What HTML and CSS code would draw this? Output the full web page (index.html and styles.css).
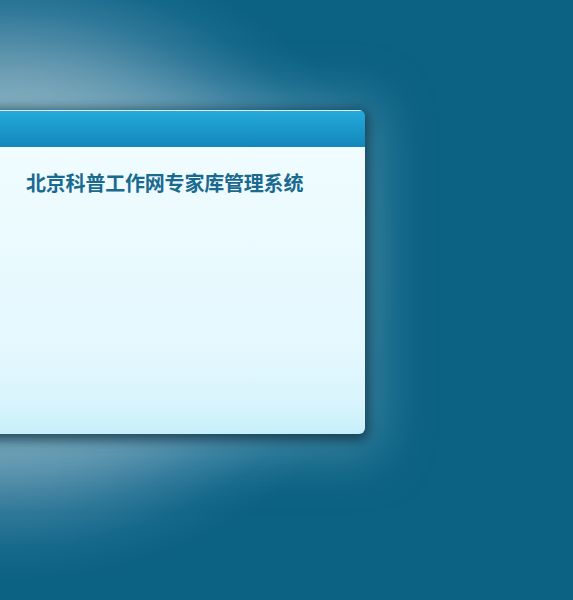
FILE: index.html
```html
<!DOCTYPE html>
<html lang="zh">
<head>
<meta charset="utf-8">
<link rel="stylesheet" href="styles.css">
</head>
<body>
<div class="stage">
  <div class="card">
    <div class="card-head"></div>
    <div class="card-body">
      <h1 class="title">北京科普工作网专家库管理系统</h1>
    </div>
  </div>
</div>
</body>
</html>
```
FILE: styles.css
```css
html, body {
  margin: 0;
  padding: 0;
  height: 100%;
}
body {
  background:
    radial-gradient(ellipse 400px 320px at 0px 262px,
      rgba(145, 180, 195, 1) 0%,
      rgba(138, 176, 191, 1) 50%,
      rgba(100, 152, 176, 0.95) 64%,
      rgba(55, 125, 158, 0.8) 79%,
      rgba(30, 111, 145, 0.5) 90%,
      rgba(12, 98, 131, 0) 100%),
    #0c6283;
  overflow: hidden;
  font-family: "Noto Sans CJK SC", "Liberation Sans", sans-serif;
}
.stage {
  padding-top: 110px;
}
.card {
  width: 580px;
  height: 324px;
  margin-left: -215px;
  border-radius: 6px;
  display: flex;
  flex-direction: column;
  overflow: hidden;
  box-shadow:
    0 3px 12px 3px rgba(15, 45, 60, 0.75),
    0 5px 50px 16px rgba(100, 160, 185, 0.55);
}
.card-head {
  height: 37px;
  flex: none;
  background: linear-gradient(#24aadb, #1386ba);
  border-top: 1px solid #d8eef6;
  box-sizing: border-box;
}
.card-body {
  flex: 1;
  background: linear-gradient(#f0fcff 0%, #e4f8fe 70%, #d8f4fc 90%, #c6eff9 100%);
  padding: 24px 0 0 241px;
}
.title {
  margin: 0;
  font-size: 20px;
  line-height: 24px;
  font-weight: bold;
  color: #1a6a90;
  letter-spacing: -0.2px;
}
```
